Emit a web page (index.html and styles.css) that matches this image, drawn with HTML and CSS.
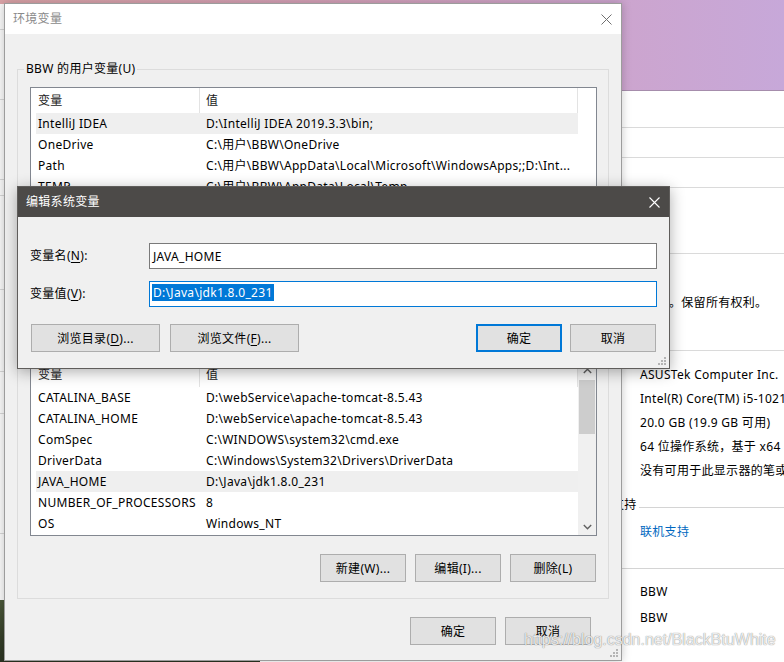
FILE: index.html
```html
<!DOCTYPE html>
<html lang="zh-CN">
<head>
<meta charset="utf-8">
<title>环境变量</title>
<link rel="stylesheet" href="styles.css">
</head>
<body>
<div class="desktop">
  <div class="wall-top"></div>
  <div class="wall-bottom"></div>

  <div class="side-win">
    <div class="side-cell h26"></div>
    <div class="side-cell h70"></div>
    <div class="side-cell h80"></div>
    <div class="side-cell h16"></div>
    <div class="side-cell h94"></div>
    <div class="side-cell h82"></div>
    <div class="side-cell h42"></div>
    <div class="side-cell h120"></div>
  </div>

  <section class="about-win">
    <div class="ab-row r1"></div>
    <div class="ab-row r2"></div>
    <div class="ab-row r3"></div>
    <div class="ab-row r4"></div>
    <div class="ab-row r5"><span class="copy">。保留所有权利。</span></div>
    <div class="ab-specs">
      <div class="spec">ASUSTek Computer Inc.</div>
      <div class="spec">Intel(R) Core(TM) i5-10210U CPU @ 1.60GHz</div>
      <div class="spec">20.0 GB (19.9 GB 可用)</div>
      <div class="spec">64 位操作系统，基于 x64 的处理器</div>
      <div class="spec">没有可用于此显示器的笔或触控输入</div>
    </div>
    <div class="ab-head"><span class="ab-head-text">支持</span><span class="ab-head-line"></span></div>
    <div class="ab-link">联机支持</div>
    <div class="ab-sep"></div>
    <div class="ab-names">
      <div class="spec">BBW</div>
      <div class="spec">BBW</div>
    </div>
  </section>

  <section class="env-win">
    <header class="titlebar light">
      <span class="ttl">环境变量</span>
      <span class="close"><svg width="11" height="11" viewBox="0 0 11 11"><path d="M0.5 0.5 L10.5 10.5 M10.5 0.5 L0.5 10.5" stroke="#6f6f6f" stroke-width="1" fill="none"/></svg></span>
    </header>
    <div class="env-body">
      <div class="group">
        <div class="group-label">BBW 的用户变量(U)</div>
        <div class="list">
          <div class="list-body">
            <div class="lv-head"><span class="c1">变量</span><span class="c2">值</span></div>
            <div class="lv-row sel"><span class="c1">IntelliJ IDEA</span><span class="c2">D:\IntelliJ IDEA 2019.3.3\bin;</span></div>
            <div class="lv-row"><span class="c1">OneDrive</span><span class="c2">C:\用户\BBW\OneDrive</span></div>
            <div class="lv-row"><span class="c1">Path</span><span class="c2">C:\用户\BBW\AppData\Local\Microsoft\WindowsApps;;D:\Int...</span></div>
            <div class="lv-row"><span class="c1">TEMP</span><span class="c2">C:\用户\BBW\AppData\Local\Temp</span></div>
            <div class="lv-row"><span class="c1">TMP</span><span class="c2">C:\用户\BBW\AppData\Local\Temp</span></div>
          </div>
          <div class="list-pad"></div>
        </div>
        <div class="btn-row">
          <button class="btn w86">新建(N)...</button>
          <button class="btn w86">编辑(E)...</button>
          <button class="btn w86">删除(D)</button>
        </div>
      </div>

      <div class="group g2">
        <div class="group-label">系统变量(S)</div>
        <div class="list">
          <div class="list-body">
            <div class="lv-head"><span class="c1">变量</span><span class="c2">值</span></div>
            <div class="lv-row"><span class="c1">CATALINA_BASE</span><span class="c2">D:\webService\apache-tomcat-8.5.43</span></div>
            <div class="lv-row"><span class="c1">CATALINA_HOME</span><span class="c2">D:\webService\apache-tomcat-8.5.43</span></div>
            <div class="lv-row"><span class="c1">ComSpec</span><span class="c2">C:\WINDOWS\system32\cmd.exe</span></div>
            <div class="lv-row"><span class="c1">DriverData</span><span class="c2">C:\Windows\System32\Drivers\DriverData</span></div>
            <div class="lv-row sel"><span class="c1">JAVA_HOME</span><span class="c2">D:\Java\jdk1.8.0_231</span></div>
            <div class="lv-row"><span class="c1">NUMBER_OF_PROCESSORS</span><span class="c2">8</span></div>
            <div class="lv-row"><span class="c1">OS</span><span class="c2">Windows_NT</span></div>
          </div>
          <div class="vscroll">
            <div class="sb-btn"><svg width="9" height="6" viewBox="0 0 9 6"><path d="M0.8 5 L4.5 1.3 L8.2 5" stroke="#606060" stroke-width="1.4" fill="none"/></svg></div>
            <div class="sb-track"><div class="sb-thumb"></div></div>
            <div class="sb-btn"><svg width="9" height="6" viewBox="0 0 9 6"><path d="M0.8 1 L4.5 4.7 L8.2 1" stroke="#606060" stroke-width="1.4" fill="none"/></svg></div>
          </div>
        </div>
        <div class="btn-row">
          <button class="btn w86">新建(W)...</button>
          <button class="btn w86">编辑(I)...</button>
          <button class="btn w86">删除(L)</button>
        </div>
      </div>

      <div class="final-row">
        <button class="btn w86">确定</button>
        <button class="btn w86">取消</button>
      </div>
    </div>
    <svg class="grip" width="9" height="9" viewBox="0 0 9 9"><g fill="#b4b4b4"><rect x="6" y="0" width="2" height="2"/><rect x="3" y="3" width="2" height="2"/><rect x="6" y="3" width="2" height="2"/><rect x="0" y="6" width="2" height="2"/><rect x="3" y="6" width="2" height="2"/><rect x="6" y="6" width="2" height="2"/></g></svg>
  </section>

  <section class="edit-dlg">
    <header class="titlebar dark">
      <span class="ttl">编辑系统变量</span>
      <span class="close"><svg width="11" height="11" viewBox="0 0 11 11"><path d="M0.5 0.5 L10.5 10.5 M10.5 0.5 L0.5 10.5" stroke="#ffffff" stroke-width="1.1" fill="none"/></svg></span>
    </header>
    <div class="dlg-body">
      <div class="field">
        <span class="field-label">变量名(<u>N</u>):</span>
        <div class="input">JAVA_HOME</div>
      </div>
      <div class="field">
        <span class="field-label">变量值(<u>V</u>):</span>
        <div class="input focus"><span class="selected">D:\Java\jdk1.8.0_231</span></div>
      </div>
      <div class="dlg-btns">
        <button class="btn w129">浏览目录(<u>D</u>)...</button>
        <button class="btn w129">浏览文件(<u>F</u>)...</button>
        <span class="spacer"></span>
        <button class="btn w86 default">确定</button>
        <button class="btn w86">取消</button>
      </div>
    </div>
    <svg class="grip" width="9" height="9" viewBox="0 0 9 9"><g fill="#b4b4b4"><rect x="6" y="0" width="2" height="2"/><rect x="3" y="3" width="2" height="2"/><rect x="6" y="3" width="2" height="2"/><rect x="0" y="6" width="2" height="2"/><rect x="3" y="6" width="2" height="2"/><rect x="6" y="6" width="2" height="2"/></g></svg>
  </section>

  <div class="watermark">https://blog.csdn.net/BlackBtuWhite</div>
</div>
</body>
</html>
```

FILE: styles.css
```css
* { box-sizing: border-box; }
html, body { margin: 0; padding: 0; }
body {
  width: 784px;
  height: 662px;
  overflow: hidden;
  font-family: "Noto Sans", "Noto Sans CJK SC", sans-serif;
  font-size: 12px;
  letter-spacing: 0.3px;
  color: #000;
  background: #fff;
}
.desktop {
  position: relative;
  width: 784px;
  height: 662px;
  overflow: hidden;
  background: #fff;
}
.wall-top {
  position: absolute;
  left: 0; top: 0;
  width: 784px; height: 92px;
  background: linear-gradient(90deg, #d9a2a6 0%, #d4a0b6 40%, #cda4cc 75%, #c7a8d9 100%);
}
.wall-bottom {
  position: absolute;
  left: 0; top: 598px;
  width: 260px; height: 64px;
  background: linear-gradient(180deg, #4d5a3b 0%, #36402a 60%, #2b3322 100%);
}

/* window at the far left */
.side-win {
  position: absolute;
  left: 0; top: 4px;
  width: 20px; height: 596px;
  background: #f9f9f9;
  display: flex;
  flex-direction: column;
}
.side-cell { border-bottom: 1px solid #d6d6d6; flex: none; }
.h16 { height: 16px; } .h26 { height: 26px; } .h42 { height: 42px; }
.h70 { height: 70px; } .h80 { height: 80px; } .h82 { height: 82px; }
.h94 { height: 94px; } .h120 { height: 120px; }

/* about window on the right */
.about-win {
  position: absolute;
  left: 600px; top: 90px;
  width: 184px; height: 572px;
  background: #fff;
  border-top: 1px solid #a68dac;
  display: flex;
  flex-direction: column;
  white-space: nowrap;
  overflow: hidden;
}
.ab-row { flex: none; border-bottom: 1px solid #dadada; }
.ab-row.r1 { height: 37px; }
.ab-row.r2 { height: 30px; }
.ab-row.r3 { height: 30px; }
.ab-row.r4 { height: 66px; }
.ab-row.r5 { height: 97px; display: flex; align-items: center; padding-left: 69px; }
.ab-specs { padding: 12px 0 0 40px; }
.spec { line-height: 24px; height: 24px; }
.ab-head { display: flex; align-items: center; margin-top: 12px; height: 20px; padding-left: 12px; }
.ab-head-text { line-height: 20px; }
.ab-head-line { flex: 1; height: 1px; background: #d4d4d4; margin: 4px 0 0 2px; }
.ab-link { color: #0067c0; line-height: 20px; margin-top: 7px; padding-left: 40px; }
.ab-sep { height: 1px; background: #d4d4d4; margin-top: 26px; flex: none; }
.ab-names { margin-top: 10px; padding-left: 40px; }
.ab-names .spec { line-height: 26px; height: 26px; }

/* generic title bar */
.titlebar { display: flex; align-items: center; height: 30px; flex: none; }
.titlebar .ttl { flex: 1; padding-left: 8px; line-height: 30px; }
.titlebar .close { width: 30px; height: 30px; display: flex; align-items: center; justify-content: center; }
.light { background: #fff; color: #8a8a8a; }
.dark { background: #4c4a48; color: #fff; }

/* environment variables window */
.env-win {
  position: absolute;
  left: 4px; top: 3px;
  width: 618px; height: 658px;
  border: 1px solid #9c9c9c;
  background: #f0f0f0;
  display: flex;
  flex-direction: column;
  box-shadow: 0 0 9px rgba(0,0,0,0.22);
}
.env-body {
  flex: 1;
  display: flex;
  flex-direction: column;
  padding: 35px 12px 0 12px;
}
.group {
  width: 592px;
  border: 1px solid #dcdcdc;
  padding: 0 11px 16px 12px;
  display: flex;
  flex-direction: column;
  flex: none;
}
.group.g2 { margin-top: 18px; }
.group-label {
  align-self: flex-start;
  margin: -9px 0 0 -6px;
  padding: 0 2px;
  line-height: 16px;
  height: 16px;
  background: #f0f0f0;
}
.list {
  margin-top: 10px;
  height: 175px;
  border: 1px solid #828790;
  background: #fff;
  display: flex;
  flex: none;
}
.list-body {
  width: 547px;
  padding-left: 5px;
  overflow: hidden;
  flex: none;
}
.list-pad { flex: 1; }
.lv-head, .lv-row {
  display: flex;
  width: 542px;
  white-space: nowrap;
  overflow: hidden;
}
.lv-head { height: 25px; line-height: 25px; color: #1a1a1a; }
.lv-head .c1 { border-right: 1px solid #e3e3e3; }
.lv-head .c2 { border-right: 1px solid #e3e3e3; }
.lv-row { height: 21px; line-height: 21px; }
.lv-row.sel { background: #efefef; }
.c1 { width: 164px; flex: none; padding-left: 2px; overflow: hidden; }
.c2 { flex: 1; padding-left: 6px; overflow: hidden; }

.vscroll {
  width: 18px;
  flex: none;
  background: #f0f0f0;
  display: flex;
  flex-direction: column;
}
.sb-btn { height: 17px; display: flex; align-items: center; justify-content: center; flex: none; }
.sb-track { flex: 1; padding: 1px 1px 0 1px; }
.sb-thumb { height: 54px; background: #cdcdcd; }

.btn-row {
  display: flex;
  justify-content: flex-end;
  gap: 9px;
  margin-top: 18px;
  padding-right: 1px;
}
.final-row {
  display: flex;
  justify-content: flex-end;
  gap: 9px;
  margin-top: 18px;
  padding-right: 18px;
}
.btn {
  font: inherit;
  letter-spacing: inherit;
  color: #000;
  margin: 0;
  padding: 0;
  height: 28px;
  background: #e1e1e1;
  border: 1px solid #adadad;
  display: flex;
  align-items: center;
  justify-content: center;
  flex: none;
  white-space: nowrap;
}
.btn u { text-decoration: underline; text-underline-offset: 2px; }
.w86 { width: 86px; }
.w129 { width: 129px; }
.btn.default { border: 2px solid #0078d7; }

.grip { position: absolute; right: 2px; bottom: 2px; }

/* edit dialog */
.edit-dlg {
  position: absolute;
  left: 17px; top: 186px;
  width: 653px; height: 183px;
  border: 1px solid #5f5d5b;
  background: #f0f0f0;
  display: flex;
  flex-direction: column;
  box-shadow: 0 3px 14px rgba(0,0,0,0.32);
}
.dlg-body {
  flex: 1;
  padding: 26px 12px 16px 12px;
  display: flex;
  flex-direction: column;
}
.field { display: flex; align-items: center; height: 26px; }
.field + .field { margin-top: 12px; }
.field-label { width: 119px; flex: none; line-height: 26px; }
.field-label u { text-underline-offset: 2px; }
.input {
  width: 508px;
  height: 26px;
  border: 1px solid #7a7a7a;
  background: #fff;
  padding-left: 3px;
  display: flex;
  align-items: center;
  white-space: nowrap;
}
.input.focus { border-color: #0078d7; padding-left: 2px; }
.selected {
  background: #0078d7;
  color: #fff;
  padding: 0 1px;
  line-height: 17px;
  margin-top: -3px;
}
.dlg-btns {
  display: flex;
  margin-top: 17px;
  padding-left: 1px;
  padding-right: 1px;
  gap: 10px;
}
.dlg-btns .spacer { flex: 1; }
.dlg-btns .default + .btn { margin-left: -2px; }

.watermark {
  position: absolute;
  left: 524px; top: 631px;
  font-family: "Liberation Sans", Arial, sans-serif;
  font-size: 16px;
  line-height: 18px;
  letter-spacing: 0;
  color: rgba(255,255,255,0.85);
  text-shadow: 0 0 1px rgba(0,0,0,0.35), 0 0 1px rgba(0,0,0,0.3);
  white-space: nowrap;
}
```
